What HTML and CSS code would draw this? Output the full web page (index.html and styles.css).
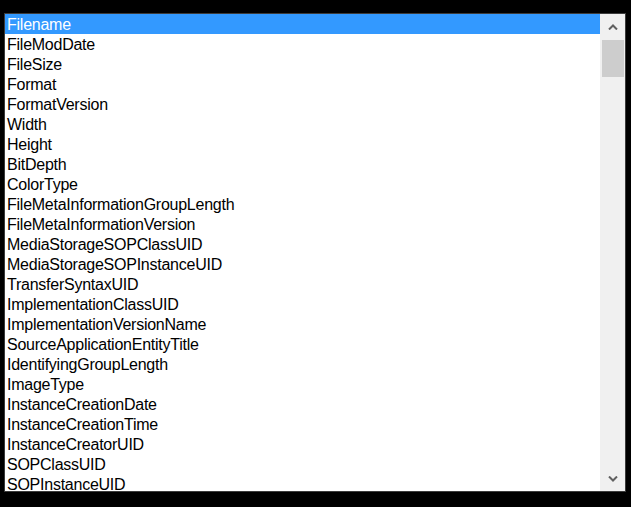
FILE: index.html
```html
<!DOCTYPE html>
<html lang="en">
<head>
    <meta charset="UTF-8">
    <title>Fields</title>
    <link rel="stylesheet" href="styles.css">
</head>
<body>
    <div class="listbox">
        <ul class="items">
            <li class="selected">Filename</li>
            <li>FileModDate</li>
            <li>FileSize</li>
            <li>Format</li>
            <li>FormatVersion</li>
            <li>Width</li>
            <li>Height</li>
            <li>BitDepth</li>
            <li>ColorType</li>
            <li>FileMetaInformationGroupLength</li>
            <li>FileMetaInformationVersion</li>
            <li>MediaStorageSOPClassUID</li>
            <li>MediaStorageSOPInstanceUID</li>
            <li>TransferSyntaxUID</li>
            <li>ImplementationClassUID</li>
            <li>ImplementationVersionName</li>
            <li>SourceApplicationEntityTitle</li>
            <li>IdentifyingGroupLength</li>
            <li>ImageType</li>
            <li>InstanceCreationDate</li>
            <li>InstanceCreationTime</li>
            <li>InstanceCreatorUID</li>
            <li>SOPClassUID</li>
            <li>SOPInstanceUID</li>
        </ul>
        <div class="scrollbar">
            <div class="arrow">
                <svg width="10" height="6" viewBox="0 0 10 6"><path d="M1 5.5 L5 1.5 L9 5.5" fill="none" stroke="#606060" stroke-width="2"/></svg>
            </div>
            <div class="track">
                <div class="thumb"></div>
            </div>
            <div class="arrow">
                <svg width="10" height="6" viewBox="0 0 10 6"><path d="M1 0.5 L5 4.5 L9 0.5" fill="none" stroke="#606060" stroke-width="2"/></svg>
            </div>
        </div>
    </div>
</body>
</html>
```

FILE: styles.css
```css
* {
    margin: 0;
    padding: 0;
    box-sizing: border-box;
}

body {
    background-color: #000;
    font-family: "Liberation Sans", Arial, sans-serif;
    padding: 13px 0 0 4px;
}

.listbox {
    display: flex;
    width: 622px;
    height: 479px;
    border: 1px solid #3c3c3c;
    background-color: #fff;
}

.items {
    flex: 1;
    list-style: none;
    overflow: hidden;
}

.items li {
    height: 20px;
    line-height: 20px;
    padding-left: 2px;
    padding-top: 1px;
    font-size: 16px;
    letter-spacing: -0.25px;
    color: #000;
    white-space: nowrap;
}

.items li.selected {
    background-color: #3399ff;
    color: #fff;
}

.scrollbar {
    width: 25px;
    display: flex;
    flex-direction: column;
    background-color: #f0f0f0;
}

.arrow {
    height: 25px;
    display: flex;
    align-items: center;
    justify-content: center;
}

.track {
    flex: 1;
    padding: 1px 1px 0 2px;
}

.thumb {
    height: 37px;
    background-color: #cdcdcd;
}
```
